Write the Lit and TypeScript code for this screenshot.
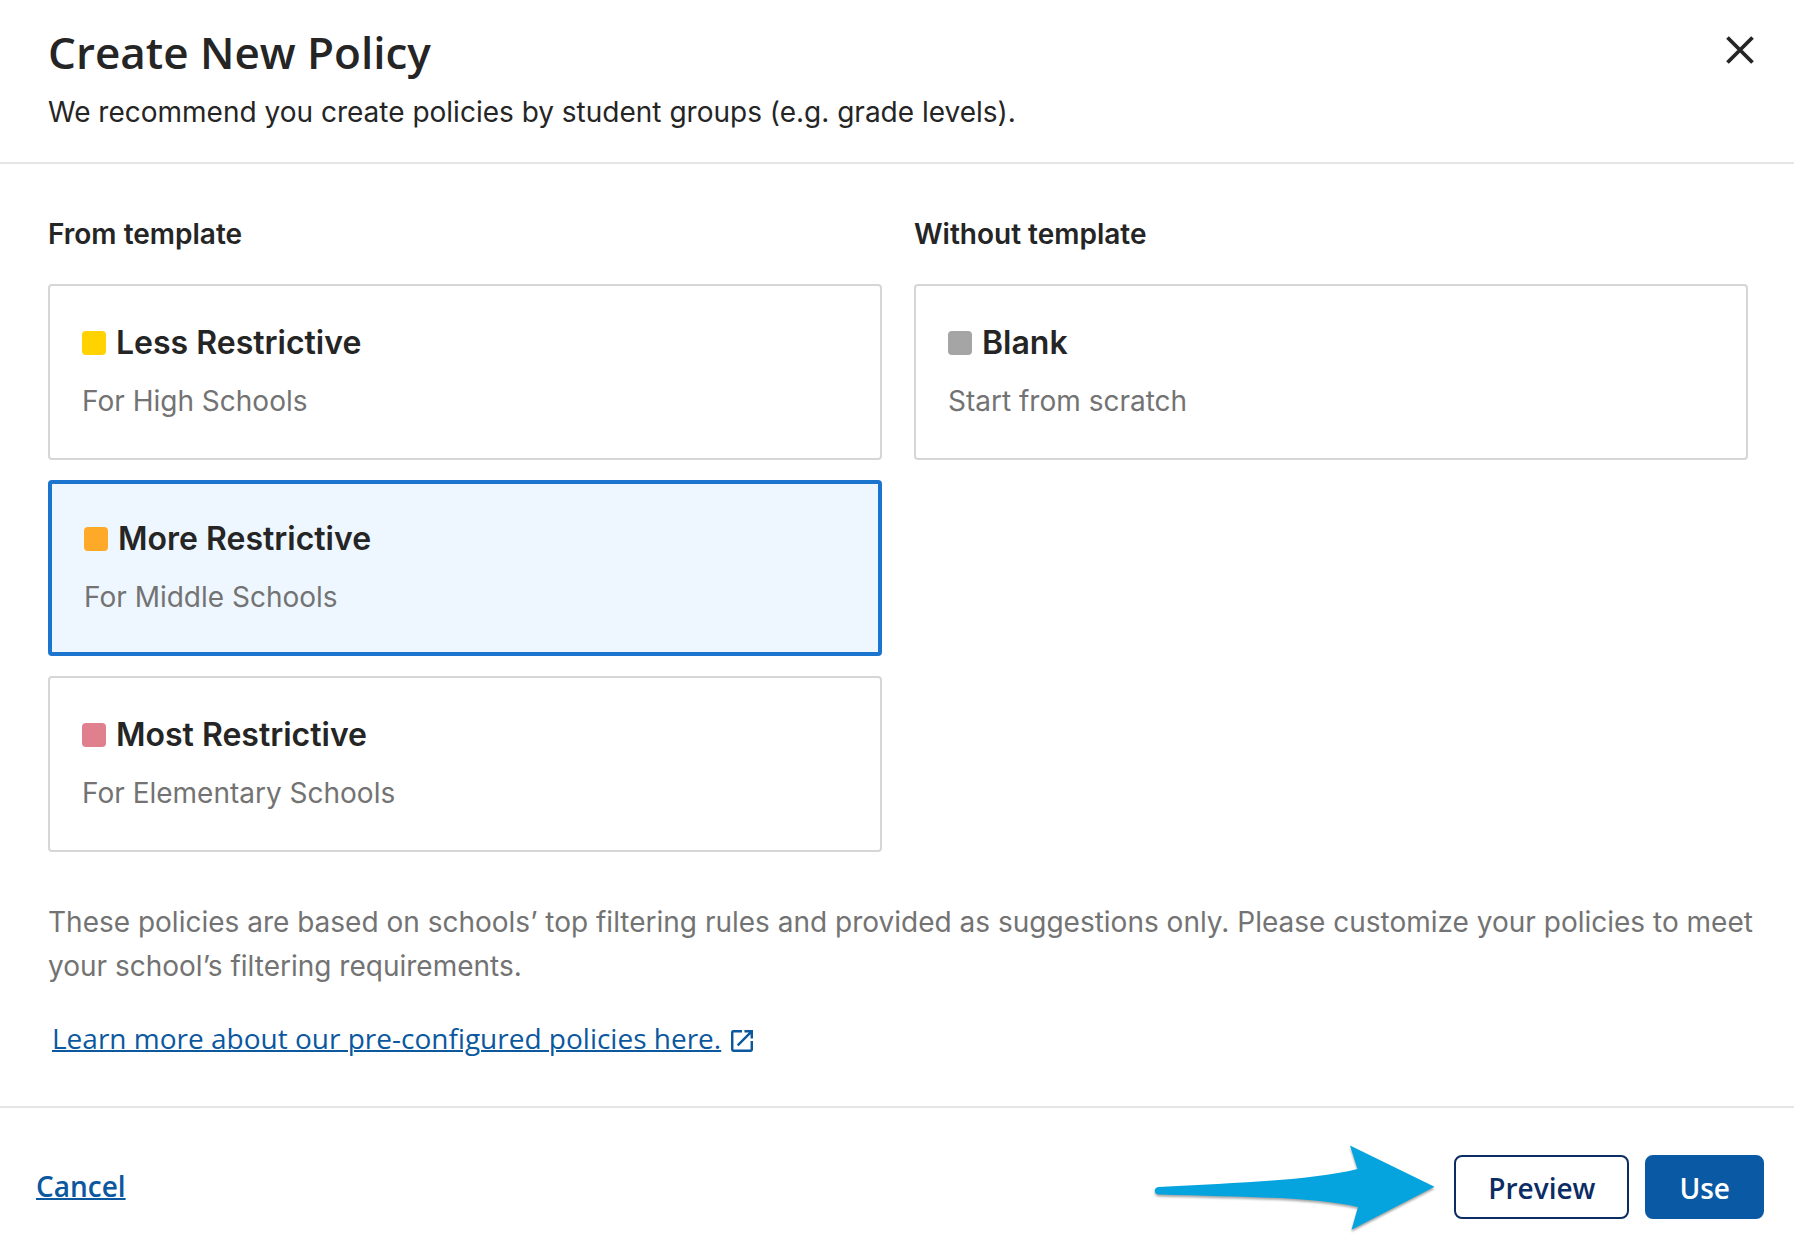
import { LitElement, html, css, svg } from "lit";
import { customElement, property, state } from "lit/decorators.js";
import { classMap } from "lit/directives/class-map.js";

interface Policy {
  id: string;
  name: string;
  note: string;
  tone: string;
}

const TEMPLATES: Policy[] = [
  { id: "less", name: "Less Restrictive", note: "For High Schools", tone: "yellow" },
  { id: "more", name: "More Restrictive", note: "For Middle Schools", tone: "orange" },
  { id: "most", name: "Most Restrictive", note: "For Elementary Schools", tone: "pink" },
];

const BLANK: Policy = { id: "blank", name: "Blank", note: "Start from scratch", tone: "gray" };

@customElement("policy-card")
export class PolicyCard extends LitElement {
  @property({ attribute: false }) policy!: Policy;
  @property({ type: Boolean }) selected = false;

  static styles = css`
    :host {
      display: block;
    }
    .card {
      display: flex;
      flex-direction: column;
      gap: 12px;
      position: relative;
      box-sizing: border-box;
      padding: 32px 32px 36px;
      border: 2px solid #d6d6d6;
      border-radius: 4px;
      background: #fff;
      cursor: pointer;
      font-family: Inter, "Liberation Sans", sans-serif;
    }
    .card.selected {
      padding: 30px 32px 34px;
      border: 4px solid #1b74ce;
      background: #eef7ff;
    }
    .radio {
      appearance: none;
      position: absolute;
      inset: 0;
      margin: 0;
      opacity: 0;
      cursor: pointer;
    }
    .title {
      display: flex;
      align-items: center;
      gap: 10px;
      font-size: 32px;
      font-weight: 600;
      line-height: 50px;
      color: #252525;
    }
    .swatch {
      width: 24px;
      height: 24px;
      border-radius: 4px;
    }
    .yellow { background: #ffd200; }
    .orange { background: #ffa928; }
    .pink { background: #e07f8d; }
    .gray { background: #a5a5a5; }
    .note {
      font-size: 28px;
      line-height: 42px;
      color: #737373;
    }
  `;

  private choose() {
    this.dispatchEvent(new CustomEvent("choose", { detail: this.policy.id }));
  }

  render() {
    const { id, name, note, tone } = this.policy;
    return html`
      <label class=${classMap({ card: true, selected: this.selected })}>
        <input class="radio" type="radio" name="policy" .value=${id} .checked=${this.selected} @change=${this.choose} />
        <span class="title"><span class="swatch ${tone}"></span>${name}</span>
        <span class="note">${note}</span>
      </label>
    `;
  }
}

const closeIcon = svg`
  <svg class="close-icon" viewBox="0 0 28 28" aria-hidden="true">
    <path d="M1.5 1.5 26.5 26.5M26.5 1.5 1.5 26.5" fill="none" stroke="currentColor" stroke-width="3.8" />
  </svg>`;

const externalIcon = svg`
  <svg class="external-icon" viewBox="3 3 18 18" aria-hidden="true">
    <path fill="currentColor" d="M19 19H5V5h7V3H5a2 2 0 0 0-2 2v14a2 2 0 0 0 2 2h14c1.100 0 2-.9 2-2v-7h-2v7zM14 3v2h3.590l-9.830 9.830 1.410 1.410L19 6.410V10h2V3h-7z" />
  </svg>`;

const arrow = svg`
  <svg class="arrow" viewBox="0 0 280 84" aria-hidden="true">
    <path fill="#05a4de" d="M4.500 42C75 38 155 36 203.500 24L196 0.500 280.500 41.700 197.500 84.800 204 62C160 52 90 52 4.500 49.500C-0.500 49.300-0.500 42.300 4.500 42Z" />
  </svg>`;

@customElement("app-root")
export class AppRoot extends LitElement {
  @state() private selected = "more";

  static styles = css`
    :host {
      display: block;
      background: #fff;
      color: #252525;
      font-family: Inter, "Liberation Sans", sans-serif;
      font-size: 28px;
      line-height: 44px;
    }
    h1, h2, p { margin: 0; }
    .header {
      display: flex;
      justify-content: space-between;
      align-items: flex-start;
      padding: 20px 36px 28px 48px;
      border-bottom: 2px solid #e5e5e5;
    }
    .heading {
      font-family: "Open Sans", "Noto Sans", sans-serif;
      font-size: 44px;
      font-weight: 600;
      line-height: 64px;
      margin-bottom: 6px;
    }
    .close {
      display: flex;
      padding: 4px;
      margin-top: 12px;
      border: 0;
      background: none;
      color: inherit;
      cursor: pointer;
    }
    .close-icon { width: 28px; height: 28px; }
    .body {
      display: flex;
      flex-direction: column;
      padding: 48px 36px 46px 48px;
      border-bottom: 2px solid #e5e5e5;
    }
    .columns {
      display: grid;
      grid-template-columns: 1fr 1fr;
      gap: 32px;
      padding-right: 10px;
    }
    .column {
      display: flex;
      flex-direction: column;
      gap: 20px;
    }
    .subheading {
      font-size: 28px;
      font-weight: 600;
      line-height: 44px;
      margin-bottom: 8px;
    }
    .disclaimer {
      margin-top: 48px;
      color: #737373;
    }
    .more {
      display: flex;
      padding: 36px 4px 8px;
    }
    .link {
      display: flex;
      align-items: flex-end;
      gap: 10px;
      font-family: "Open Sans", "Noto Sans", sans-serif;
      line-height: 28px;
      color: #0b589f;
      text-decoration: none;
    }
    .link-text {
      text-decoration: underline;
      text-decoration-thickness: 2px;
    }
    .external-icon { width: 22px; height: 22px; }
    .footer {
      display: flex;
      align-items: center;
      justify-content: space-between;
      padding: 37px 30px 30px 36px;
    }
    .button {
      box-sizing: border-box;
      height: 64px;
      padding: 2px 32px 0;
      border: 2px solid #0a59a4;
      border-radius: 8px;
      background: #0a59a4;
      color: #fff;
      font: 600 28px/44px "Open Sans", "Noto Sans", sans-serif;
      cursor: pointer;
    }
    .button.outline {
      border-color: #0c2d63;
      background: #fff;
      color: #0c2d63;
    }
    .cancel {
      padding: 0 0 2px;
      border: 0;
      background: none;
      color: #0b589f;
      font: 600 28px/44px "Open Sans", "Noto Sans", sans-serif;
      text-decoration: underline;
      text-decoration-thickness: 2px;
      cursor: pointer;
    }
    .actions {
      display: flex;
      align-items: center;
      gap: 16px;
    }
    .arrow {
      width: 280px;
      height: 84px;
      margin-right: 4px;
      overflow: visible;
      filter: drop-shadow(0 2px 1px rgba(0, 0, 0, 0.35));
    }
  `;

  private card(policy: Policy) {
    return html`<policy-card
      .policy=${policy}
      .selected=${this.selected === policy.id}
      @choose=${(e: CustomEvent<string>) => (this.selected = e.detail)}
    ></policy-card>`;
  }

  render() {
    return html`
      <header class="header">
        <div>
          <h1 class="heading">Create New Policy</h1>
          <p>We recommend you create policies by student groups (e.g. grade levels).</p>
        </div>
        <button class="close" type="button" aria-label="Close">${closeIcon}</button>
      </header>
      <main class="body">
        <div class="columns">
          <section class="column">
            <h2 class="subheading">From template</h2>
            ${TEMPLATES.map((t) => this.card(t))}
          </section>
          <section class="column">
            <h2 class="subheading">Without template</h2>
            ${this.card(BLANK)}
          </section>
        </div>
        <p class="disclaimer">
          These policies are based on schools’ top filtering rules and provided as suggestions only. Please customize
          your policies to meet your school’s filtering requirements.
        </p>
        <p class="more">
          <a class="link" href="#"><span class="link-text">Learn more about our pre-configured policies here.</span>${externalIcon}</a>
        </p>
      </main>
      <footer class="footer">
        <button class="cancel" type="button">Cancel</button>
        <div class="actions">
          ${arrow}
          <button class="button outline" type="button">Preview</button>
          <button class="button" type="button">Use</button>
        </div>
      </footer>
    `;
  }
}
